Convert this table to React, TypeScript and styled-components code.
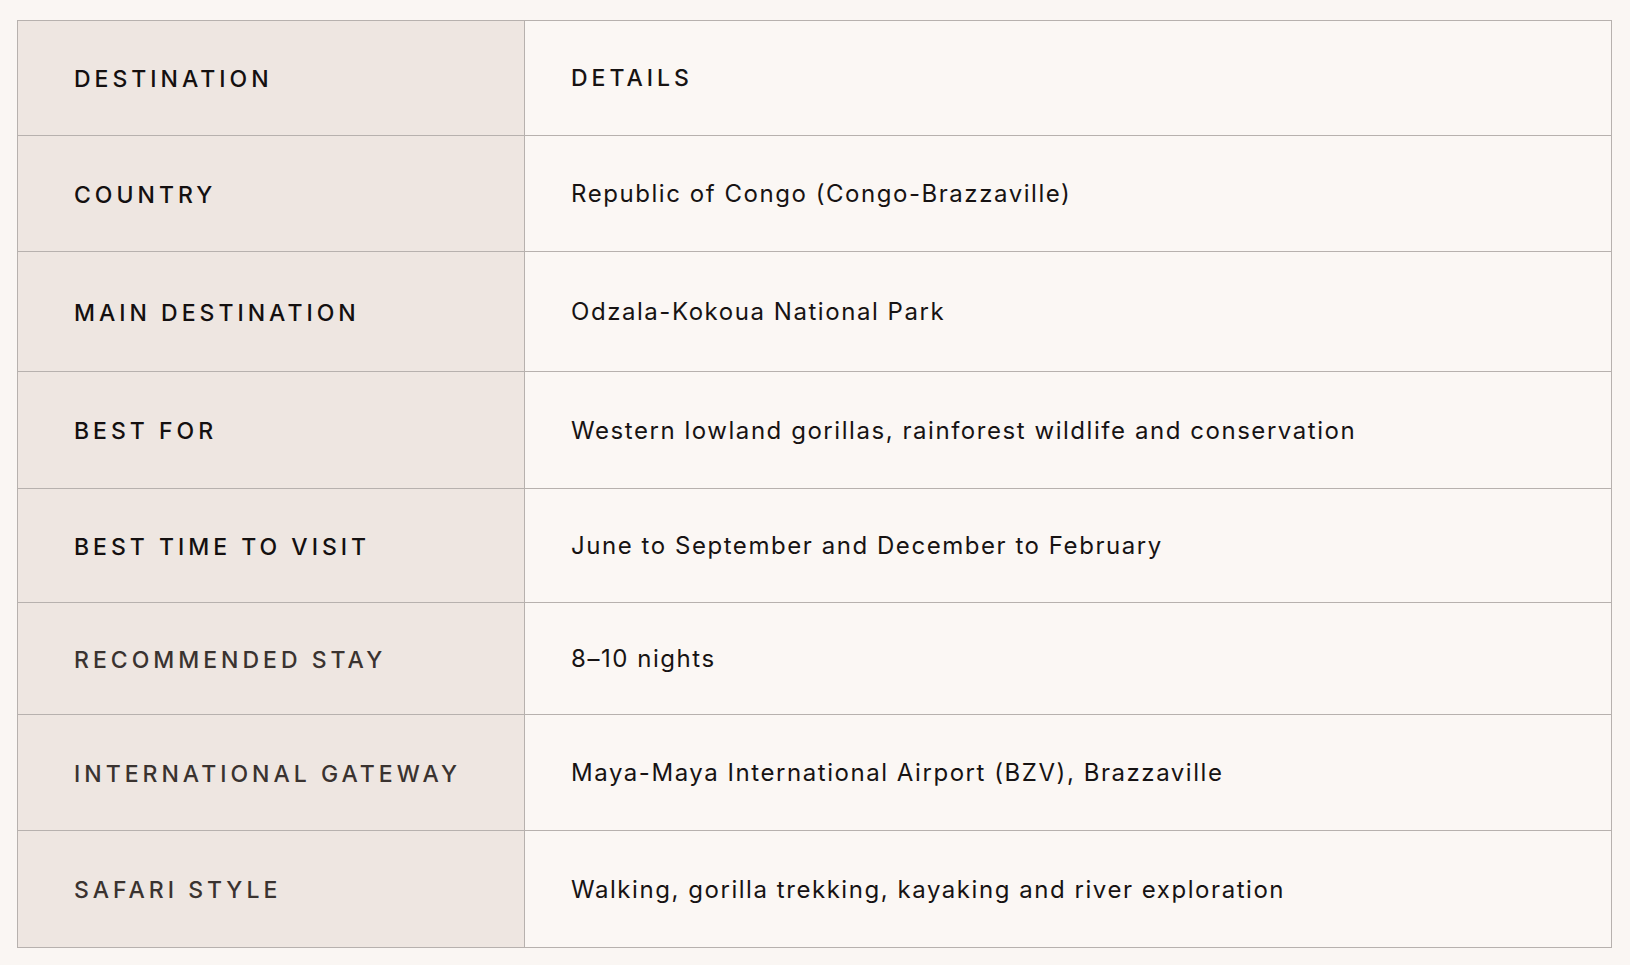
import styled, { createGlobalStyle } from "styled-components";

type TRow = {
  label: string;
  details: string;
  height: number;
  faded?: boolean;
};

const rows: TRow[] = [
  { label: "Country", details: "Republic of Congo (Congo-Brazzaville)", height: 116 },
  { label: "Main destination", details: "Odzala-Kokoua National Park", height: 120 },
  { label: "Best for", details: "Western lowland gorillas, rainforest wildlife and conservation", height: 117 },
  { label: "Best time to visit", details: "June to September and December to February", height: 114 },
  { label: "Recommended stay", details: "8–10 nights", height: 112, faded: true },
  { label: "International gateway", details: "Maya-Maya International Airport (BZV), Brazzaville", height: 116, faded: true },
  { label: "Safari style", details: "Walking, gorilla trekking, kayaking and river exploration", height: 117, faded: true },
];

export default function App() {
  return (
    <>
      <GlobalStyle />
      <Page>
        <Table>
          <Row $height={114}>
            <LabelCell>Destination</LabelCell>
            <DetailCell $head>Details</DetailCell>
          </Row>
          {rows.map((row) => (
            <Row key={row.label} $height={row.height}>
              <LabelCell $faded={row.faded}>{row.label}</LabelCell>
              <DetailCell>{row.details}</DetailCell>
            </Row>
          ))}
        </Table>
      </Page>
    </>
  );
}

const GlobalStyle = createGlobalStyle`
  html, body {
    margin: 0;
    background: #faf6f3;
  }
  body {
    font-family: Inter, "Liberation Sans", sans-serif;
    color: #161212;
  }
`;

const Page = styled.div`
  padding: 20px 18px 19px 17px;
  min-height: 965px;
  box-sizing: border-box;
`;

const Table = styled.div`
  display: flex;
  flex-direction: column;
  border: 1.5px solid #b7b1ae;
  background: #fbf7f4;
`;

const Row = styled.div<{ $height: number }>`
  display: grid;
  grid-template-columns: 507px 1fr;
  height: ${(p) => p.$height}px;
  box-sizing: border-box;
  & + & {
    border-top: 1.5px solid #b7b1ae;
  }
`;

const LabelCell = styled.div<{ $faded?: boolean }>`
  display: flex;
  align-items: center;
  padding: 2px 0 0 56px;
  background: #eee6e1;
  border-right: 1.5px solid #b7b1ae;
  text-transform: uppercase;
  font-size: 23px;
  font-weight: 500;
  letter-spacing: 4px;
  color: ${(p) => (p.$faded ? "#3a3330" : "#141010")};
`;

const DetailCell = styled.div<{ $head?: boolean }>`
  display: flex;
  align-items: center;
  padding-left: 46px;
  font-size: ${(p) => (p.$head ? "23px" : "24px")};
  font-weight: ${(p) => (p.$head ? 500 : 400)};
  letter-spacing: ${(p) => (p.$head ? "4px" : "1.55px")};
  text-transform: ${(p) => (p.$head ? "uppercase" : "none")};
  color: #171313;
`;
